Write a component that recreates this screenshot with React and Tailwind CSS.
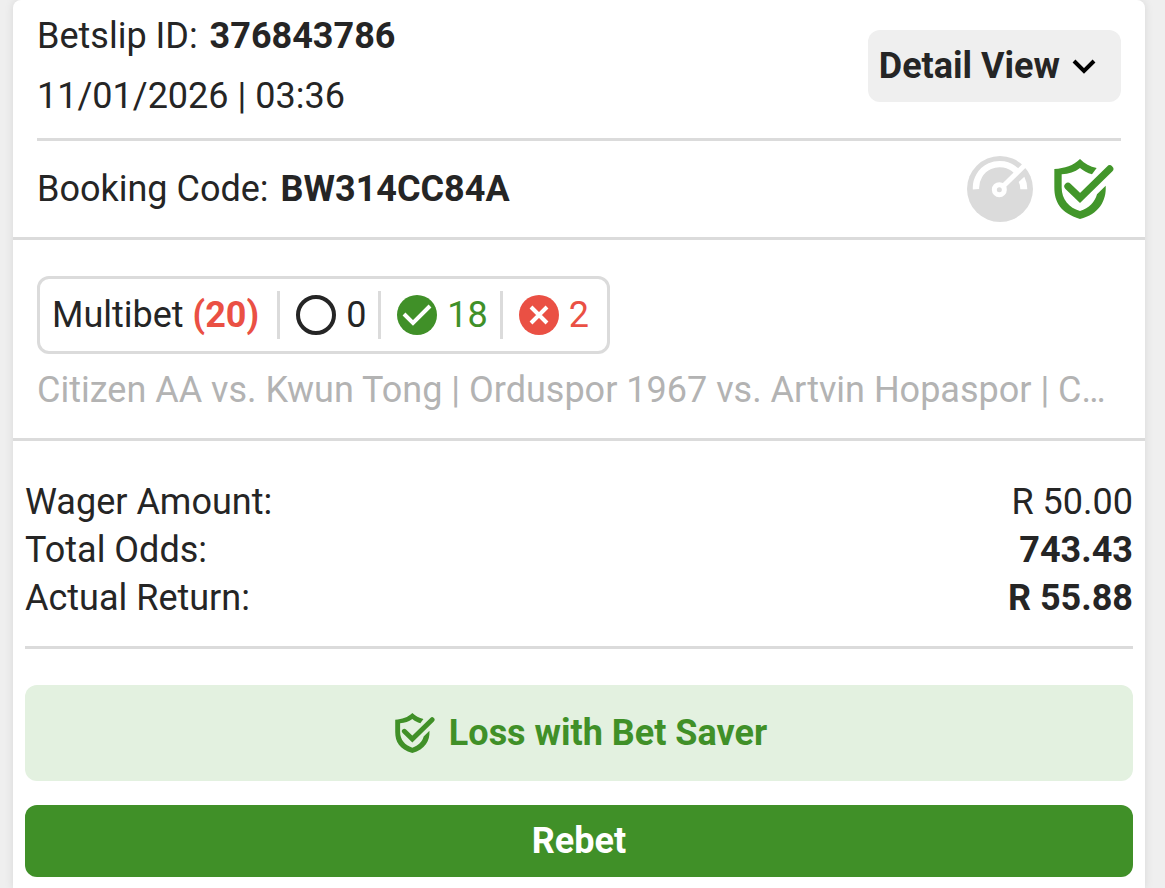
import { useState } from 'react';

const summary = [
  { label: 'Wager Amount:', value: 'R 50.00', bold: false },
  { label: 'Total Odds:', value: '743.43', bold: true },
  { label: 'Actual Return:', value: 'R 55.88', bold: true },
];

function ShieldCheck({ className }) {
  return (
    <svg viewBox="0 0 180 180" className={className} aria-hidden="true">
      <path
        fill="currentColor"
        d="M78 0C92 14 108 23 128 27L114 46C100 42 89 36 78 27C62 39 45 45 23 46V86C23 120 45 146 78 156C106 147 122 130 129 106L155 80C158 125 135 165 78 180C20 162 1 130 1 85V30C32 28 58 20 78 0Z"
      />
      <path d="M42 82L78 117L167 30" fill="none" stroke="currentColor" strokeWidth="22" strokeLinecap="round" />
    </svg>
  );
}

function Gauge({ className }) {
  return (
    <svg viewBox="0 0 198 198" className={className} aria-hidden="true">
      <circle cx="99" cy="99" r="99" fill="#dbdbdb" />
      <path d="M27 100A71 71 0 0 1 148 45" fill="none" stroke="#fff" strokeWidth="19" />
      <path d="M172 62Q181 80 181 100H160Q160 86 155 78Z" fill="#fff" />
      <path d="M103 96L182 19" stroke="#fff" strokeWidth="15" />
      <circle cx="97" cy="101" r="15" fill="#dbdbdb" stroke="#fff" strokeWidth="15" />
    </svg>
  );
}

function Divider() {
  return <span className="h-12 w-[3px] bg-[#dbdbdb]" />;
}

export default function App() {
  const [open, setOpen] = useState(false);

  return (
    <div className="min-h-screen bg-[#efefef] pl-[13px] pr-5 font-['Roboto',sans-serif] text-4xl leading-12 text-[#252525]">
      <main className="flex min-h-screen flex-col rounded-t-lg bg-white shadow-[0_0_10px_rgba(0,0,0,0.1)]">
        <header className="mx-6 flex items-center justify-between border-b-3 border-[#dbdbdb] pt-3 pb-[18px]">
          <div className="flex flex-col gap-3">
            <p>
              Betslip ID: <strong className="ml-[3px] font-bold">376843786</strong>
            </p>
            <p>11/01/2026 | 03:36</p>
          </div>
          <button
            type="button"
            aria-expanded={open}
            onClick={() => setOpen(!open)}
            className="flex h-[72px] items-center gap-3 rounded-xl bg-[#efefef] pr-[25px] pl-[11px] font-bold"
          >
            Detail View
            <svg viewBox="0 0 24 16" className="h-4 w-6" fill="none" stroke="#000" strokeWidth="4" aria-hidden="true">
              <path d="M2 3L12 13L22 3" />
            </svg>
          </button>
        </header>

        <section className="flex h-[99px] items-center justify-between border-b-3 border-[#dbdbdb] pr-[31px] pl-6">
          <p>
            Booking Code: <strong className="ml-[3px] font-bold">BW314CC84A</strong>
          </p>
          <div className="flex items-center gap-[21px]">
            <Gauge className="size-[66px]" />
            <ShieldCheck className="size-[60px] text-[#42962a]" />
          </div>
        </section>

        <section className="border-b-3 border-[#dbdbdb] px-6 pt-9 pb-6">
          <div className="flex h-[78px] w-fit items-center rounded-xl border-3 border-[#dbdbdb] pr-[18px] pl-3">
            <span className="mr-[18px]">
              Multibet <strong className="font-bold text-[#ea5044]">(20)</strong>
            </span>
            <Divider />
            <span className="mr-3 ml-4 flex items-center gap-[10px]">
              <span className="size-10 rounded-full border-4 border-[#252525]" />0
            </span>
            <Divider />
            <span className="mr-3 ml-4 flex items-center gap-[10px] text-[#409028]">
              <svg viewBox="0 0 40 40" className="size-10" aria-hidden="true">
                <circle cx="20" cy="20" r="20" fill="currentColor" />
                <path d="M7 19L16 28L33 11" fill="none" stroke="#fff" strokeWidth="4" />
              </svg>
              18
            </span>
            <Divider />
            <span className="ml-4 flex items-center gap-[10px] text-[#ea5044]">
              <svg viewBox="0 0 40 40" className="size-10" aria-hidden="true">
                <circle cx="20" cy="20" r="20" fill="currentColor" />
                <path d="M12 12L28 28M28 12L12 28" stroke="#fff" strokeWidth="4" />
              </svg>
              2
            </span>
          </div>
          <p className="mt-3 truncate text-[#b3b3b3]">
            Citizen AA vs. Kwun Tong | Orduspor 1967 vs. Artvin Hopaspor | Concordia vs. Huracan
          </p>
        </section>

        <section className="px-3 pt-[37px] pb-3">
          <dl className="border-b-3 border-[#dbdbdb] pb-6">
            {summary.map((row) => (
              <div key={row.label} className="flex justify-between">
                <dt>{row.label}</dt>
                <dd className={row.bold ? 'font-bold' : ''}>{row.value}</dd>
              </div>
            ))}
          </dl>
          <div className="mt-9 flex h-24 items-center justify-center gap-[14px] rounded-xl bg-[#e3f1e0] pl-1 font-bold text-[#409028]">
            <ShieldCheck className="size-10" />
            Loss with Bet Saver
          </div>
          <button type="button" className="mt-6 h-[72px] w-full rounded-xl bg-[#409028] font-bold text-white">
            Rebet
          </button>
        </section>
      </main>
    </div>
  );
}
